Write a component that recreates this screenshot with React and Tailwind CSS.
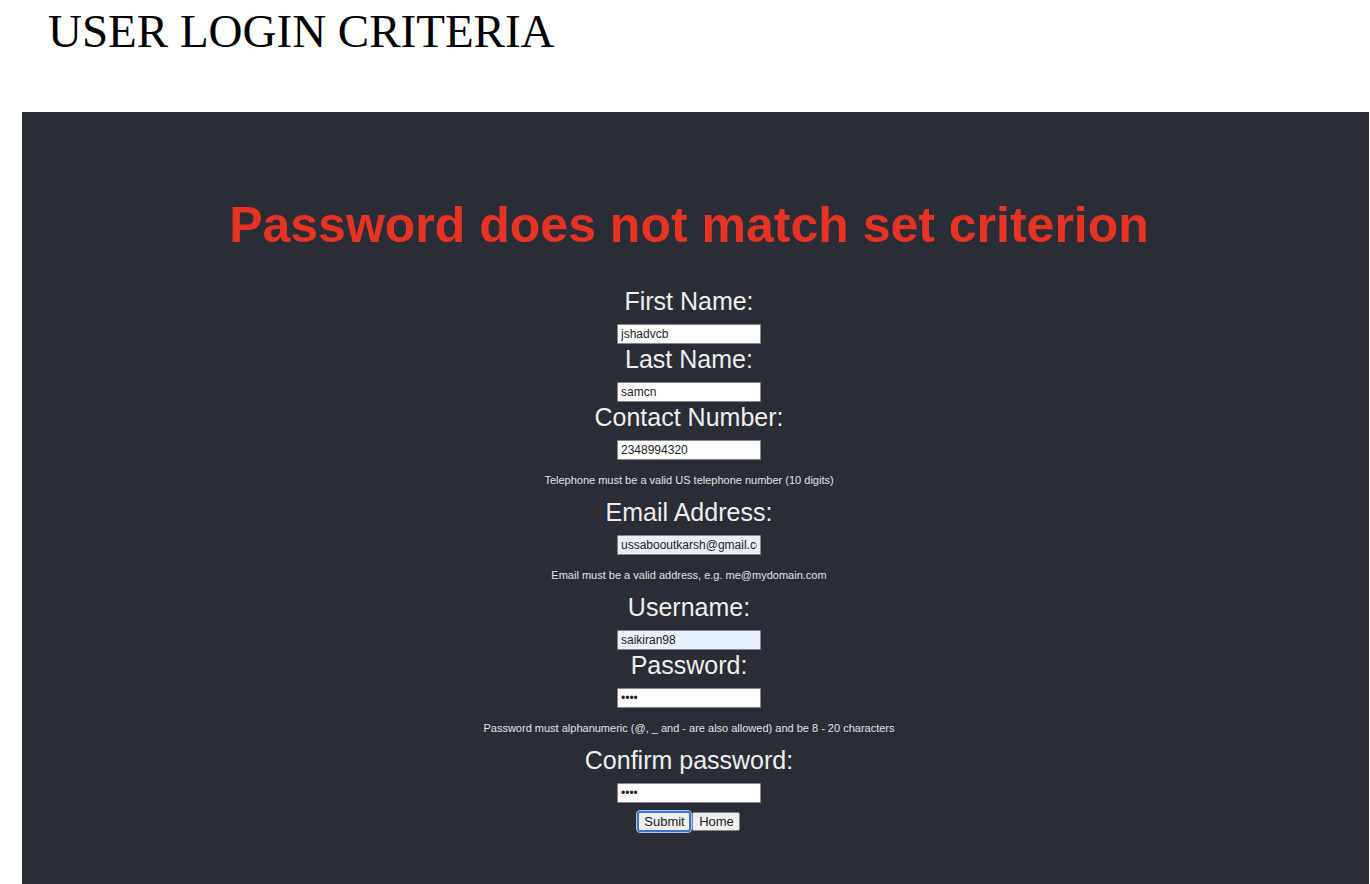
const fields = [
  { id: 'first-name', label: 'First Name:', type: 'text', value: 'jshadvcb', fill: 'bg-white' },
  { id: 'last-name', label: 'Last Name:', type: 'text', value: 'samcn', fill: 'bg-white' },
  {
    id: 'contact',
    label: 'Contact Number:',
    type: 'tel',
    value: '2348994320',
    fill: 'bg-white',
    hint: 'Telephone must be a valid US telephone number (10 digits)',
  },
  {
    id: 'email',
    label: 'Email Address:',
    type: 'email',
    value: 'ussabooutkarsh@gmail.com',
    fill: 'bg-[#e9eefc]',
    hint: 'Email must be a valid address, e.g. me@mydomain.com',
  },
  { id: 'username', label: 'Username:', type: 'text', value: 'saikiran98', fill: 'bg-[#e8f0fd]' },
  {
    id: 'password',
    label: 'Password:',
    type: 'password',
    value: 'abcd',
    fill: 'bg-white',
    hint: 'Password must alphanumeric (@, _ and - are also allowed) and be 8 - 20 characters',
  },
  { id: 'confirm', label: 'Confirm password:', type: 'password', value: 'abcd', fill: 'bg-white' },
];

function Field({ id, label, type, value, fill, hint }) {
  return (
    <div className="flex flex-col items-center">
      <label htmlFor={id} className="pb-2 text-[25px] leading-[30px] text-[#eeeff1]">
        {label}
      </label>
      <input
        id={id}
        type={type}
        defaultValue={value}
        aria-describedby={hint ? id + '-hint' : undefined}
        className={'h-5 w-36 rounded-[1px] border border-[#85868a] px-[3px] text-[12px] text-[#222] outline-none ' + fill}
      />
      {hint && (
        <p id={id + '-hint'} className="pt-3 pb-[9px] text-[11px] leading-4 text-[#e2e3e5]">
          {hint}
        </p>
      )}
    </div>
  );
}

export default function App() {
  return (
    <div className="flex min-h-screen flex-col bg-white">
      <h1 className="px-12 pt-[3px] pb-[53px] font-['Liberation_Serif',serif] text-[47px] leading-[56px] text-black">
        USER LOGIN CRITERIA
      </h1>
      <main className="mr-px ml-[22px] flex flex-1 flex-col items-center bg-[#2a2d36] pt-[83px] pr-[13px] pb-12 font-['Liberation_Sans',Arial,sans-serif]">
        <h2 className="text-center text-[50px] leading-[60px] font-bold text-[#e63323]">
          Password does not match set criterion
        </h2>
        <form className="flex flex-col items-center pt-[31px]" onSubmit={(e) => e.preventDefault()}>
          {fields.map((f) => (
            <Field key={f.id} {...f} />
          ))}
          <div className="flex items-center justify-center gap-px pt-2">
            <button
              type="submit"
              className="h-[21px] w-[54px] rounded-[3px] border-2 border-[#3f74c8] bg-[#efefef] text-[13px] leading-[17px] text-[#222] outline-1 outline-[#a9c3ec]"
            >
              Submit
            </button>
            <button
              type="button"
              className="h-[19px] w-12 rounded-[2px] border border-[#85868a] bg-[#efefef] text-[13px] leading-[17px] text-[#222]"
            >
              Home
            </button>
          </div>
        </form>
      </main>
    </div>
  );
}
